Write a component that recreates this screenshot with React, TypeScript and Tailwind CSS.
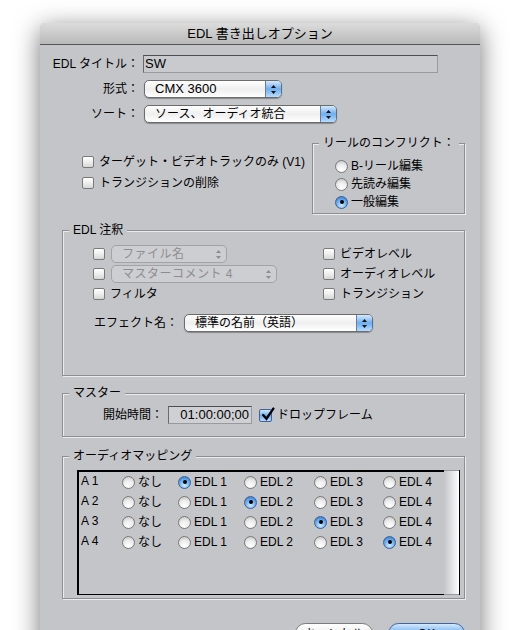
import React from 'react';

const BODY = 'bg-[#c4c5c9]';

function Checkbox({ checked = false }: { checked?: boolean }) {
  if (checked) {
    return (
      <span className="relative inline-block h-[13px] w-[13px] shrink-0 rounded-[2px] border border-[#40659c] bg-gradient-to-b from-[#d3e8fc] via-[#6badf0] to-[#b3dafc]">
        <svg viewBox="0 0 14 14" className="absolute -top-[3px] left-[0px] h-[15px] w-[15px]">
          <path d="M3 7.5 L6 11 L12.5 1.5" fill="none" stroke="#000" strokeWidth="2.2" strokeLinecap="round" />
        </svg>
      </span>
    );
  }
  return (
    <span className="inline-block h-[12px] w-[12px] shrink-0 rounded-[2px] border border-[#7a7a7a] bg-gradient-to-b from-white via-[#eeeeee] to-[#d6d6d6]" />
  );
}

function Radio({ on = false }: { on?: boolean }) {
  if (on) {
    return (
      <span className="inline-flex h-[13px] w-[13px] shrink-0 items-center justify-center rounded-full border border-[#39609a] bg-[radial-gradient(circle_at_50%_75%,#d2ecff_0%,#64a9f0_55%,#2d6ec6_100%)]">
        <span className="h-[4px] w-[4px] rounded-full bg-black" />
      </span>
    );
  }
  return (
    <span className="inline-block h-[13px] w-[13px] shrink-0 rounded-full border border-[#7a7a7a] bg-[radial-gradient(circle_at_50%_80%,#ffffff_0%,#ededed_50%,#bcbcbc_100%)]" />
  );
}

function Arrows({ color }: { color: string }) {
  return (
    <svg viewBox="0 0 7 11" className="h-[11px] w-[7px]">
      <path d="M3.5 1 L6 4 L1 4 Z" fill={color} />
      <path d="M3.5 10 L6 7 L1 7 Z" fill={color} />
    </svg>
  );
}

function Popup({
  label,
  width,
  disabled = false,
  size = 'text-[12px]',
}: {
  label: string;
  width: string;
  disabled?: boolean;
  size?: string;
}) {
  if (disabled) {
    return (
      <div className={`flex h-[18px] ${width} items-stretch rounded-[5px] border border-[#a3a3a6] bg-[#cdced1]`}>
        <span className="flex-1 truncate pl-[10px] text-[12px] leading-[16px] tracking-[0.5px] text-[#8d8d90]">{label}</span>
        <span className="flex w-[16px] items-center justify-center">
          <Arrows color="#8d8d90" />
        </span>
      </div>
    );
  }
  return (
    <div className={`flex h-[18px] ${width} items-stretch rounded-[5px] border border-[#6c6c6c] bg-gradient-to-b from-white via-[#efefef] to-white shadow-[0_1px_1px_rgba(0,0,0,0.3)]`}>
      <span className={`flex-1 truncate pl-[10px] ${size} leading-[16px] text-black`}>{label}</span>
      <span className="flex w-[16px] items-center justify-center rounded-r-[4px] border-l border-[#5d7fae] bg-gradient-to-b from-[#d4e9fc] via-[#6eaef0] to-[#b8dcfc]">
        <Arrows color="#111" />
      </span>
    </div>
  );
}

function Group({
  title,
  className,
  pad,
  children,
}: {
  title: string;
  className: string;
  pad: string;
  children: React.ReactNode;
}) {
  return (
    <fieldset className={`border border-[#8e8e90] shadow-[inset_1px_1px_0_#ececee,1px_1px_0_#ececee] ${className}`}>
      <legend className={`ml-[6px] px-[4px] whitespace-nowrap text-[12px] leading-[16px] ${BODY}`}>{title}</legend>
      <div className={pad}>{children}</div>
    </fieldset>
  );
}

function CheckRow({ label, checked = false }: { label: React.ReactNode; checked?: boolean }) {
  return (
    <div className="flex h-[18px] items-center gap-[5px]">
      <Checkbox checked={checked} />
      <span className="whitespace-nowrap text-[12px] leading-[16px]">{label}</span>
    </div>
  );
}

function RadioRow({ label, on = false }: { label: string; on?: boolean }) {
  return (
    <div className="flex h-[18px] items-center gap-[3px]">
      <Radio on={on} />
      <span className="whitespace-nowrap text-[12px] leading-[16px]">{label}</span>
    </div>
  );
}

const mapping = [
  { ch: 'A 1', sel: 1 },
  { ch: 'A 2', sel: 2 },
  { ch: 'A 3', sel: 3 },
  { ch: 'A 4', sel: 4 },
];
const targets = ['なし', 'EDL 1', 'EDL 2', 'EDL 3', 'EDL 4'];
const colWidths = ['w-[56px]', 'w-[66px]', 'w-[70px]', 'w-[69px]', 'w-[60px]'];

export default function App() {
  return (
    <div className="h-[630px] overflow-hidden bg-white pt-[23px] pl-[40px] font-['Liberation_Sans','Noto_Sans_CJK_JP',sans-serif] text-black">
      <div className={`w-[440px] rounded-t-[5px] ${BODY} shadow-[0_6px_26px_rgba(0,0,0,0.55)]`}>
        {/* title bar */}
        <div className="flex h-[22px] items-center justify-center rounded-t-[5px] border-b border-[#555] bg-gradient-to-b from-[#dcdcdc] to-[#b9b9b9] text-[13px] leading-[16px]">
          EDL 書き出しオプション
        </div>

        {/* top form */}
        <div className="mt-[10px] flex flex-col gap-[7px]">
          <div className="flex h-[18px] items-center">
            <span className="w-[103px] pr-[4px] text-right text-[12px] leading-[16px]">EDL タイトル：</span>
            <div className="h-[18px] w-[295px] border border-[#9a9a9c] border-t-[#4e4e4e] border-l-[#6a6a6a] bg-[#c9cacd] pl-[1px] text-[13px] leading-[15px]">
              SW
            </div>
          </div>
          <div className="flex h-[18px] items-center">
            <span className="w-[104px] pr-[5px] text-right text-[12px] leading-[16px]">形式：</span>
            <Popup label="CMX 3600" width="w-[138px]" size="text-[13px]" />
          </div>
          <div className="flex h-[18px] items-center">
            <span className="w-[104px] pr-[5px] text-right text-[12px] leading-[16px]">ソート：</span>
            <Popup label="ソース、オーディオ統合" width="w-[193px]" />
          </div>
        </div>

        {/* options + reel conflict */}
        <div className="mt-[12px] flex items-start">
          <div className="mt-[18px] ml-[42px] flex flex-col gap-[3px]">
            <CheckRow label="ターゲット・ビデオトラックのみ (V1)" />
            <CheckRow label="トランジションの削除" />
          </div>
          <Group title="リールのコンフリクト：" className="mr-[15px] ml-auto w-[153px]" pad="pt-[6px] pb-[2px] pl-[22px]">
            <RadioRow label="B-リール編集" />
            <RadioRow label="先読み編集" />
            <RadioRow label="一般編集" on />
          </Group>
        </div>

        {/* EDL notes */}
        <Group title="EDL 注釈" className="mt-[8px] ml-[22px] w-[403px]" pad="pt-[7px] pb-[43px] pl-[30px]">
          <div className="flex">
            <div className="flex w-[230px] flex-col gap-[2px]">
              <div className="flex h-[18px] items-center gap-[6px]">
                <Checkbox />
                <Popup label="ファイル名" width="w-[116px]" disabled />
              </div>
              <div className="flex h-[18px] items-center gap-[6px]">
                <Checkbox />
                <Popup label="マスターコメント 4" width="w-[166px]" disabled />
              </div>
              <CheckRow label="フィルタ" />
            </div>
            <div className="flex flex-col gap-[2px]">
              <CheckRow label="ビデオレベル" />
              <CheckRow label="オーディオレベル" />
              <CheckRow label="トランジション" />
            </div>
          </div>
          <div className="mt-[11px] flex h-[18px] items-center gap-[6px]">
            <span className="ml-[1px] text-[12px] leading-[16px]">エフェクト名：</span>
            <Popup label="標準の名前（英語）" width="w-[189px]" />
          </div>
        </Group>

        {/* master */}
        <Group title="マスター" className="mt-[9px] ml-[22px] w-[403px]" pad="pt-[5px] pb-[12px] pl-[40px]">
          <div className="flex h-[18px] items-center">
            <span className="text-[12px] leading-[16px]">開始時間：</span>
            <div className="ml-[5px] h-[18px] w-[84px] border border-[#9a9a9c] border-t-[#4e4e4e] border-l-[#6a6a6a] bg-[#cfd0d3] pr-[2px] text-right text-[13px] leading-[16px]">
              01:00:00;00
            </div>
            <div className="ml-[7px]">
              <CheckRow label="ドロップフレーム" checked />
            </div>
          </div>
        </Group>

        {/* audio mapping */}
        <Group title="オーディオマッピング" className="mt-[11px] ml-[22px] w-[403px]" pad="pt-[6px] pr-[4px] pb-[3px] pl-[14px]">
          <div className="flex h-[125px] border-r border-l-2 border-black">
            <div className="flex-1 border-t-2 border-b border-black">
              {mapping.map((m) => (
                <div key={m.ch} className="flex h-[20px] items-center">
                  <span className="w-[43px] pb-[3px] pl-[2px] text-[12px] leading-[14px]">{m.ch}</span>
                  {targets.map((t, i) => (
                    <div key={t} className={`flex ${colWidths[i]} items-center gap-[3px]`}>
                      <Radio on={i === m.sel} />
                      <span className="text-[12px] leading-[16px]">{t}</span>
                    </div>
                  ))}
                </div>
              ))}
            </div>
            <div className="w-[15px] border-t border-b border-[#9a9a9a] bg-gradient-to-r from-[#c4c5c9] to-white" />
          </div>
        </Group>

        {/* buttons */}
        <div className="mt-[24px] flex justify-end gap-[15px] pr-[15px] pb-[20px]">
          <button className="h-[21px] w-[78px] rounded-full border border-[#7b7b7b] bg-gradient-to-b from-white via-[#efefef] to-white text-[12px] leading-[16px]">
            キャンセル
          </button>
          <button className="h-[21px] w-[77px] rounded-full border border-[#3f64a0] bg-gradient-to-b from-[#d4e9fc] via-[#6eaef0] to-[#b8dcfc] text-[12px] leading-[16px]">
            OK
          </button>
        </div>
      </div>
    </div>
  );
}
